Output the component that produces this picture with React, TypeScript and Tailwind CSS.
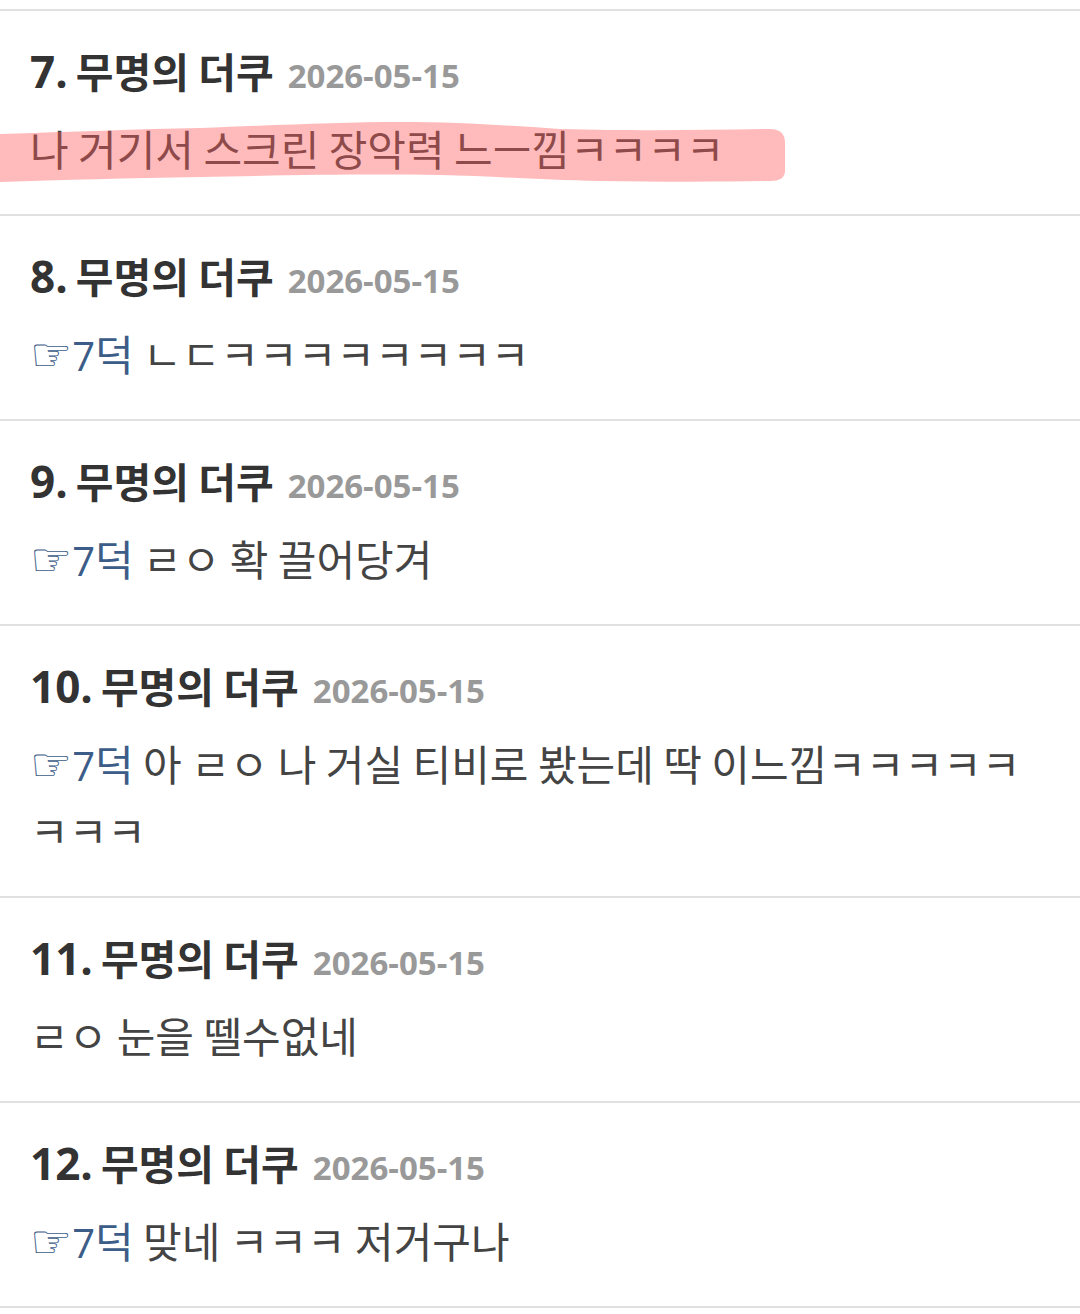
const comments = [
  { no: 7, reply: false, text: '나 거기서 스크린 장악력 느ㅡ낌ㅋㅋㅋㅋ', marked: true },
  { no: 8, reply: true, text: 'ㄴㄷㅋㅋㅋㅋㅋㅋㅋㅋ' },
  { no: 9, reply: true, text: 'ㄹㅇ 확 끌어당겨' },
  { no: 10, reply: true, text: '아 ㄹㅇ 나 거실 티비로 봤는데 딱 이느낌ㅋㅋㅋㅋㅋㅋㅋㅋ' },
  { no: 11, reply: false, text: 'ㄹㅇ 눈을 뗄수없네' },
  { no: 12, reply: true, text: '맞네 ㅋㅋㅋ 저거구나' },
];

const latin = "font-['Open_Sans','Noto_Sans_CJK_KR',sans-serif]";
const hangul = "font-['Noto_Sans_CJK_KR','Open_Sans',sans-serif]";

function Marker() {
  return (
    <svg
      className="absolute left-0 top-0 pointer-events-none"
      width="1080"
      height="203"
      viewBox="0 0 1080 203"
    >
      <path
        d="M0 123 C70 121 140 118 200 117 C280 114 340 111 400 111 C460 111 500 114 560 118 C640 120 700 119 770 118 Q785 118 785 132 L785 160 Q785 170 770 170 C720 171 660 171 600 170 C540 169 490 165 440 164 C360 163 300 164 200 166 C130 167 60 169 0 171 Z"
        fill="rgba(255,85,85,0.4)"
      />
    </svg>
  );
}

function Comment({ c }: { c: (typeof comments)[number] }) {
  return (
    <div className="relative pl-[30px] pr-[40px] pt-[35px] pb-[33px] border-b-2 border-[#e0e0e0]">
      <div className="h-[48px] leading-[48px] flex items-baseline whitespace-nowrap">
        <span className={`${latin} text-[44px] font-bold text-[#333]`}>{c.no}.</span>
        <span className={`${hangul} text-[41px] font-bold text-[#333] ml-[8px]`}>무명의 더쿠</span>
        <span className={`${latin} text-[33px] font-bold text-[#999] ml-[14px]`}>2026-05-15</span>
      </div>
      <div className={`${hangul} mt-[20px] text-[42px] leading-[67px] text-[#444]`}>
        {c.reply && (
          <span className="text-[#3c5d88] leading-[40px]">
            <span className="font-['DejaVu_Sans',sans-serif] text-[47px] leading-[40px]">☞</span>
            <span className={`${latin} text-[40px] leading-[40px]`}>7</span>덕{' '}
          </span>
        )}
        {c.text}
      </div>
      {c.marked && <Marker />}
    </div>
  );
}

export default function App() {
  return (
    <div className="w-[1080px] min-h-[1314px] bg-white">
      <div className="h-[11px] border-b-2 border-[#e0e0e0]" />
      {comments.map((c) => (
        <Comment key={c.no} c={c} />
      ))}
    </div>
  );
}
